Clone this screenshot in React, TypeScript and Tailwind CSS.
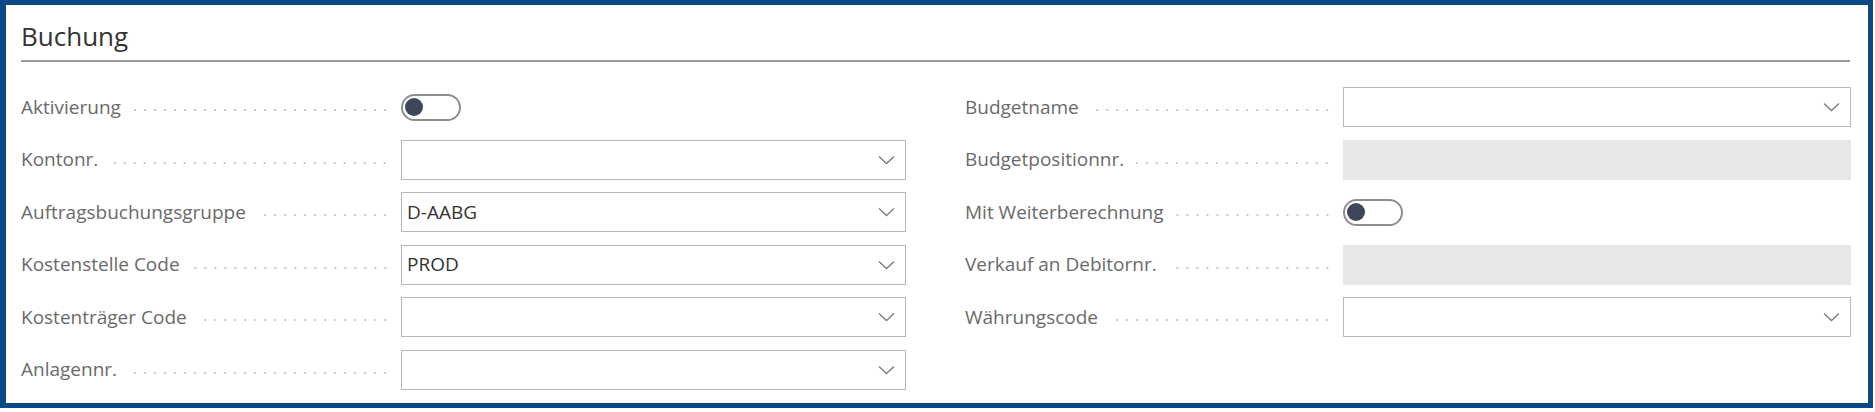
import React from "react";

type Kind = "toggle" | "select" | "readonly";
interface Field {
  label: string;
  kind: Kind;
  value?: string;
}

const leftFields: Field[] = [
  { label: "Aktivierung", kind: "toggle" },
  { label: "Kontonr.", kind: "select" },
  { label: "Auftragsbuchungsgruppe", kind: "select", value: "D-AABG" },
  { label: "Kostenstelle Code", kind: "select", value: "PROD" },
  { label: "Kostenträger Code", kind: "select" },
  { label: "Anlagennr.", kind: "select" },
];

const rightFields: Field[] = [
  { label: "Budgetname", kind: "select" },
  { label: "Budgetpositionnr.", kind: "readonly" },
  { label: "Mit Weiterberechnung", kind: "toggle" },
  { label: "Verkauf an Debitornr.", kind: "readonly" },
  { label: "Währungscode", kind: "select" },
];

function Chevron() {
  return (
    <svg width="17" height="10" viewBox="0 0 17 10" fill="none">
      <polyline points="1,1.5 8.5,8.5 16,1.5" stroke="#7b7b7b" strokeWidth="1.3" />
    </svg>
  );
}

function Toggle() {
  return (
    <div className="flex h-[27px] w-[60px] items-center rounded-full border-2 border-[#8e8e8e] bg-white pl-[2px]">
      <div className="h-[18px] w-[18px] rounded-full bg-[#3d4759]" />
    </div>
  );
}

function Control({ f }: { f: Field }) {
  if (f.kind === "toggle") return <Toggle />;
  if (f.kind === "readonly") return <div className="h-[40px] w-full bg-[#e6e7e8]" />;
  return (
    <div className="flex h-[40px] w-full items-center justify-between border border-[#b8b8b8] bg-white pl-[5px] pr-[10px]">
      <span className="text-[19px] text-[#333333]">{f.value ?? ""}</span>
      <Chevron />
    </div>
  );
}

function Row({ f, labelWidth }: { f: Field; labelWidth: string }) {
  return (
    <div className="flex h-[40px] items-center">
      <div className={`flex shrink-0 items-center ${labelWidth}`}>
        <span className="whitespace-nowrap text-[19px] text-[#6a6a6a]">{f.label}</span>
        <span className="ml-[12px] mr-[11px] h-[4px] flex-1 translate-y-[3px] bg-[radial-gradient(circle,#c9c9c9_1px,transparent_1.5px)] bg-[length:10px_4px] bg-right bg-repeat-x" />
      </div>
      <div className="flex flex-1 items-center">
        <Control f={f} />
      </div>
    </div>
  );
}

export default function App() {
  return (
    <div className="bg-white" style={{ fontFamily: '"Open Sans", "Noto Sans", sans-serif' }}>
      <div className="h-[408px] w-[1873px] border-b-[5px] border-l-[6px] border-r-[5px] border-t-[5px] border-[#0b4a86] bg-white pl-[15px] pr-[18px]">
        <div className="border-b-2 border-[#9b9b9b] pb-[8px] pt-[15px]">
          <h2 className="text-[26px] leading-[32px] text-[#333333]">Buchung</h2>
        </div>
        <div className="mt-[25px] grid grid-cols-[885px_886px] gap-x-[59px]">
          <div className="flex flex-col gap-[12.5px]">
            {leftFields.map((f) => (
              <Row key={f.label} f={f} labelWidth="w-[380px]" />
            ))}
          </div>
          <div className="flex flex-col gap-[12.5px]">
            {rightFields.map((f) => (
              <Row key={f.label} f={f} labelWidth="w-[378px]" />
            ))}
          </div>
        </div>
      </div>
    </div>
  );
}
